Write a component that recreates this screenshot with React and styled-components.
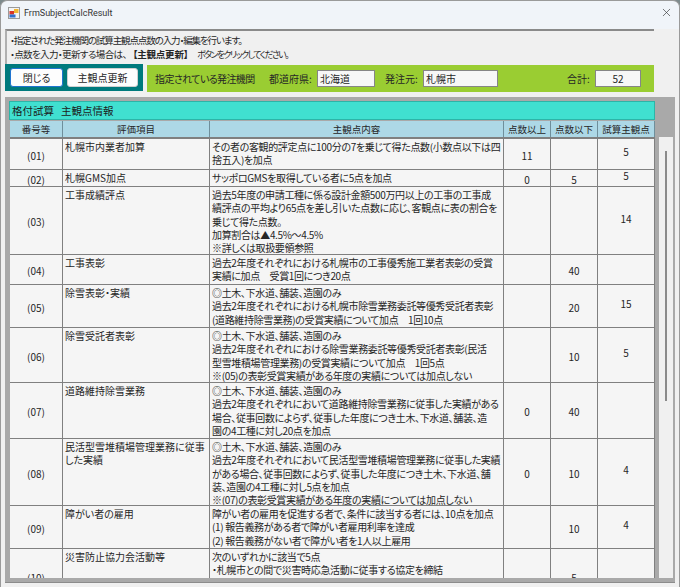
import styled, { createGlobalStyle } from "styled-components";
import { X } from "lucide-react";

const UI_FONT = `"Noto Sans CJK JP", "Noto Sans", sans-serif`;
const COLUMNS = "52px 146px 293px 46px 46px 56px";

const rows = [
	{ no: "(01)", name: ["札幌市内業者加算"], height: 30, min: "11", max: "", score: "5",
		body: ["その者の客観的評定点に100分の7を乗じて得た点数(小数点以下は四", "捨五入)を加点"] },
	{ no: "(02)", name: ["札幌GMS加点"], height: 16, min: "0", max: "5", score: "5",
		body: ["サッポロGMSを取得している者に5点を加点"] },
	{ no: "(03)", name: ["工事成績評点"], height: 67, min: "", max: "", score: "14",
		body: ["過去5年度の申請工種に係る設計金額500万円以上の工事の工事成", "績評点の平均より65点を差し引いた点数に応じ、客観点に表の割合を", "乗じて得た点数。", "加算割合は▲4.5%～4.5%", "※詳しくは取扱要領参照"] },
	{ no: "(04)", name: ["工事表彰"], height: 29, min: "", max: "40", score: "",
		body: ["過去2年度それぞれにおける札幌市の工事優秀施工業者表彰の受賞", "実績に加点　受賞1回につき20点"] },
	{ no: "(05)", name: ["除雪表彰・実績"], height: 42, min: "", max: "20", score: "15",
		body: ["◎土木、下水道、舗装、造園のみ", "過去2年度それぞれにおける札幌市除雪業務委託等優秀受託者表彰", "(道路維持除雪業務)の受賞実績について加点　1回10点"] },
	{ no: "(06)", name: ["除雪受託者表彰"], height: 54, min: "", max: "10", score: "5",
		body: ["◎土木、下水道、舗装、造園のみ", "過去2年度それぞれにおける除雪業務委託等優秀受託者表彰(民活", "型雪堆積場管理業務)の受賞実績について加点　1回5点", "※(05)の表彰受賞実績がある年度の実績については加点しない"] },
	{ no: "(07)", name: ["道路維持除雪業務"], height: 55, min: "0", max: "40", score: "",
		body: ["◎土木、下水道、舗装、造園のみ", "過去2年度それぞれにおいて道路維持除雪業務に従事した実績がある", "場合、従事回数によらず、従事した年度につき土木、下水道、舗装、造", "園の4工種に対し20点を加点"] },
	{ no: "(08)", name: ["民活型雪堆積場管理業務に従事", "した実績"], height: 66, min: "0", max: "10", score: "4",
		body: ["◎土木、下水道、舗装、造園のみ", "過去2年度それぞれにおいて民活型雪堆積場管理業務に従事した実績", "がある場合、従事回数によらず、従事した年度につき土木、下水道、舗", "装、造園の4工種に対し5点を加点", "※(07)の表彰受賞実績がある年度の実績については加点しない"] },
	{ no: "(09)", name: ["障がい者の雇用"], height: 42, min: "", max: "10", score: "4",
		body: ["障がい者の雇用を促進する者で、条件に該当する者には、10点を加点", "(1) 報告義務がある者で障がい者雇用利率を達成", "(2) 報告義務がない者で障がい者を1人以上雇用"] },
	{ no: "(10)", name: ["災害防止協力会活動等"], height: 55, min: "", max: "5", score: "",
		body: ["次のいずれかに該当で5点", "・札幌市との間で災害時応急活動に従事する協定を締結", "・札幌市内の地域で防災活動に従事する団体に加入"] },
];

function AppIcon() {
	return (
		<svg width="12" height="12" viewBox="0 0 12 12">
			<rect x="0.5" y="0.5" width="11" height="11" fill="#f4f4f4" stroke="#9a9a9a" />
			<rect x="6" y="2" width="4.5" height="4" fill="#f2b632" />
			<rect x="1.5" y="4" width="4.5" height="3.5" fill="#d8352a" />
			<rect x="1.5" y="7.5" width="6" height="3" fill="#2f6fd0" />
		</svg>
	);
}

function Lines({ items }) {
	return items.map((line) => <Line key={line}>{line}</Line>);
}

export default function App() {
	return (
		<>
			<GlobalStyle />
			<Window>
				<TitleBar>
					<AppIcon />
					<TitleText>FrmSubjectCalcResult</TitleText>
					<CloseIcon><X size={13} strokeWidth={1.2} /></CloseIcon>
				</TitleBar>
				<Content>
					<Notice>
						<NoticeLine $spacing={-1.1}>・指定された発注機関の試算主観点点数の入力・編集を行います。</NoticeLine>
						<NoticeLine $spacing={-0.6}>
							・点数を入力・更新する場合は、<Emphasis>【主観点更新】</Emphasis><KanaRun>ボタンをクリックしてください。</KanaRun>
						</NoticeLine>
					</Notice>
					<ToolRow>
						<ButtonPanel>
							<PanelButton $width={53} $isDefault>閉じる</PanelButton>
							<PanelButton $width={71}>主観点更新</PanelButton>
						</ButtonPanel>
						<AgencyPanel>
							<AgencyLabel $width={114} $tight>指定されている発注機関</AgencyLabel>
							<AgencyLabel $width={48}>都道府県:</AgencyLabel>
							<AgencyInput $width={58} defaultValue="北海道" />
							<AgencyLabel $width={38} $left={10}>発注元:</AgencyLabel>
							<AgencyInput $width={75} defaultValue="札幌市" />
							<AgencyLabel $width={28} $push>合計:</AgencyLabel>
							<AgencyInput $width={46} $center defaultValue="52" />
						</AgencyPanel>
					</ToolRow>
					<GridPanel>
						<GridTitle>格付試算   主観点情報</GridTitle>
						<HeadRow>
							<HeadCell>番号等</HeadCell>
							<HeadCell>評価項目</HeadCell>
							<HeadCell>主観点内容</HeadCell>
							<HeadCell>点数以上</HeadCell>
							<HeadCell>点数以下</HeadCell>
							<HeadCell>試算主観点</HeadCell>
						</HeadRow>
						<GridBody>
							<RowList>
								{rows.map((row) => (
									<DataRow key={row.no} $height={row.height}>
										<NumberCell>{row.no}</NumberCell>
										<TextCell><Lines items={row.name} /></TextCell>
										<TextCell $tight><Lines items={row.body} /></TextCell>
										<NumberCell>{row.min}</NumberCell>
										<NumberCell>{row.max}</NumberCell>
										<NumberCell $raised>{row.score}</NumberCell>
									</DataRow>
								))}
							</RowList>
							<ScrollTrack>
								<ScrollThumb />
							</ScrollTrack>
						</GridBody>
					</GridPanel>
				</Content>
			</Window>
		</>
	);
}

const GlobalStyle = createGlobalStyle`
	html, body {
		margin: 0;
		padding: 0;
		background: #7d8a8c;
	}
`;

const Window = styled.div`
	width: 680px;
	height: 587px;
	box-sizing: border-box;
	border: 1px solid #9a9a9a;
	border-bottom: 0;
	border-radius: 7px 7px 0 0;
	background: #f0f4f9;
	overflow: hidden;
	font-family: ${UI_FONT};
	font-size: 10px;
	color: #262626;
	font-feature-settings: "palt";
`;

const TitleBar = styled.div`
	display: flex;
	align-items: center;
	box-sizing: border-box;
	height: 28px;
	padding: 0 6px 5px 7px;
`;

const TitleText = styled.span`
	margin-left: 4px;
	font-family: Roboto, sans-serif;
	font-size: 9px;
	color: #333;
`;

const CloseIcon = styled.span`
	display: flex;
	margin-left: auto;
	color: #333;
`;

const Content = styled.div`
	padding: 0 3px 0 4px;
	background: #f0f0f0;
	height: 558px;
`;

const Notice = styled.div`
	box-sizing: border-box;
	width: 649px;
	height: 35px;
	padding: 2px 0 0 3px;
	border-top: 2px solid #8a8a8a;
	border-left: 2px solid #b0b0b0;
`;

const Line = styled.div`
	height: 13.3px;
	white-space: nowrap;
`;

const NoticeLine = styled.div`
	height: 14px;
	font-size: 9.5px;
	line-height: 14px;
	letter-spacing: ${(p) => p.$spacing}px;
	white-space: nowrap;
`;

const Emphasis = styled.span`
	margin: 0 9px 0 6px;
	font-weight: 700;
	letter-spacing: -0.2px;
`;

const KanaRun = styled.span`
	font-size: 8.8px;
	letter-spacing: -1.45px;
`;

const ToolRow = styled.div`
	display: flex;
	gap: 4px;
	height: 28px;
`;

const ButtonPanel = styled.div`
	display: flex;
	gap: 4px;
	box-sizing: border-box;
	width: 138px;
	height: 27px;
	padding: 4px 5px;
	background: #007a7d;
`;

const PanelButton = styled.button`
	box-sizing: border-box;
	width: ${(p) => p.$width}px;
	height: 19px;
	padding: 0;
	border: 1px solid ${(p) => (p.$isDefault ? "#1f74d0" : "#d0d0d0")};
	border-radius: 3px;
	background: #fdfdfd;
	font: inherit;
	color: inherit;
	font-feature-settings: inherit;
`;

const AgencyPanel = styled.div`
	display: flex;
	align-items: center;
	box-sizing: border-box;
	width: 507px;
	height: 27px;
	margin-top: 1px;
	padding: 0 13px 0 8px;
	background: #9acd32;
`;

const AgencyLabel = styled.span`
	flex: none;
	width: ${(p) => p.$width}px;
	margin-left: ${(p) => (p.$push ? "auto" : `${p.$left || 0}px`)};
	letter-spacing: ${(p) => (p.$tight ? "-0.6px" : "0")};
	white-space: nowrap;
`;

const AgencyInput = styled.input`
	flex: none;
	box-sizing: border-box;
	width: ${(p) => p.$width}px;
	height: 17px;
	padding: 0 2px;
	border: 1px solid #868686;
	background: #f7f7f7;
	font: inherit;
	color: inherit;
	font-feature-settings: inherit;
	text-align: ${(p) => (p.$center ? "center" : "left")};
`;

const GridPanel = styled.div`
	display: flex;
	flex-direction: column;
	box-sizing: border-box;
	width: 670px;
	height: 486px;
	margin-top: 5px;
	padding: 4px 1px 4px 4px;
	border-bottom: 1px solid #8c8c8c;
	background: #a9a9a9;
`;

const GridTitle = styled.div`
	flex: none;
	box-sizing: border-box;
	width: 646px;
	height: 19px;
	padding-left: 2px;
	border: 1px solid #2cb5a8;
	background: #40e0d0;
	font-size: 10.5px;
	line-height: 17px;
	color: #1c1c1c;
	white-space: pre;
`;

const HeadRow = styled.div`
	display: grid;
	grid-template-columns: ${COLUMNS};
	gap: 1px;
	flex: none;
	width: 645px;
	margin: 1px 0 0 1px;
	background: #6f8f9b;
`;

const HeadCell = styled.div`
	height: 16px;
	background: #add8e6;
	font-size: 9.5px;
	line-height: 16px;
	text-align: center;
	white-space: nowrap;
`;

const GridBody = styled.div`
	display: flex;
	flex: 1;
	min-height: 0;
`;

const RowList = styled.div`
	flex: none;
	width: 645px;
	margin-left: 1px;
	padding-top: 2px;
	overflow: hidden;
	background: #808080;
`;

const DataRow = styled.div`
	display: grid;
	grid-template-columns: ${COLUMNS};
	grid-template-rows: ${(p) => p.$height}px;
	gap: 1px;
	height: ${(p) => p.$height}px;
	margin-bottom: 1px;
`;

const TextCell = styled.div`
	min-height: 0;
	padding: 1px 0 0 2px;
	background: #f5f5f5;
	line-height: 13.3px;
	letter-spacing: ${(p) => (p.$tight ? "-0.35px" : "0")};
	overflow: hidden;
`;

const NumberCell = styled.div`
	display: flex;
	align-items: center;
	justify-content: center;
	box-sizing: border-box;
	min-height: 0;
	padding-bottom: ${(p) => (p.$raised ? "5px" : "0")};
	padding-top: ${(p) => (p.$raised ? "0" : "2px")};
	background: #f5f5f5;
	line-height: 13px;
`;

const ScrollTrack = styled.div`
	flex: none;
	width: 14px;
	margin-left: 4px;
	padding-top: 14px;
	background: #f0f0f0;
`;

const ScrollThumb = styled.div`
	width: 2px;
	height: 250px;
	margin-left: 6px;
	background: #8a8a8a;
`;
